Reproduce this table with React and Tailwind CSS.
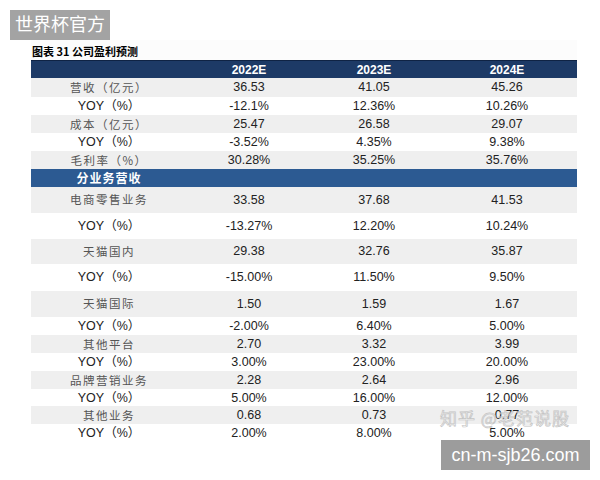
const rows = [
  { label: "营收（亿元）", cn: true, v: ["36.53", "41.05", "45.26"], h: "h-[19px]" },
  { label: "YOY（%）", v: ["-12.1%", "12.36%", "10.26%"], h: "h-[18px]" },
  { label: "成本（亿元）", cn: true, v: ["25.47", "26.58", "29.07"], h: "h-[18px]" },
  { label: "YOY（%）", v: ["-3.52%", "4.35%", "9.38%"], h: "h-[18px]" },
  { label: "毛利率（%）", cn: true, v: ["30.28%", "35.25%", "35.76%"], h: "h-[18px]" },
  { section: "分业务营收", h: "h-[18px]" },
  { label: "电商零售业务", cn: true, v: ["33.58", "37.68", "41.53"], h: "h-[26px]" },
  { label: "YOY（%）", v: ["-13.27%", "12.20%", "10.24%"], h: "h-[26px]" },
  { label: "天猫国内", cn: true, v: ["29.38", "32.76", "35.87"], h: "h-[25px]" },
  { label: "YOY（%）", v: ["-15.00%", "11.50%", "9.50%"], h: "h-[27px]" },
  { label: "天猫国际", cn: true, v: ["1.50", "1.59", "1.67"], h: "h-[26px]" },
  { label: "YOY（%）", v: ["-2.00%", "6.40%", "5.00%"], h: "h-[18px]" },
  { label: "其他平台", cn: true, v: ["2.70", "3.32", "3.99"], h: "h-[18px]" },
  { label: "YOY（%）", v: ["3.00%", "23.00%", "20.00%"], h: "h-[18px]" },
  { label: "品牌营销业务", cn: true, v: ["2.28", "2.64", "2.96"], h: "h-[18px]" },
  { label: "YOY（%）", v: ["5.00%", "16.00%", "12.00%"], h: "h-[17px]" },
  { label: "其他业务", cn: true, v: ["0.68", "0.73", "0.77"], h: "h-[18px]" },
  { label: "YOY（%）", v: ["2.00%", "8.00%", "5.00%"], h: "h-[18px]" },
];

const cols = "grid grid-cols-[156px_124px_126px_140px] items-center";

export default function App() {
  return (
    <div className="relative w-[600px] h-[480px] bg-white overflow-hidden font-['Liberation_Sans','Noto_Sans_CJK_SC',sans-serif] text-[#222]">
      {/* top tag */}
      <div className="ml-[10px] pt-[10px]">
        <div className="w-[100px] h-[30px] bg-[#a3a3a3] text-white text-[18px] leading-[30px] text-center">
          世界杯官方
        </div>
      </div>

      <div className="ml-[31px] w-[546px] bg-[#fcfcfc]">
        {/* title */}
        <div className="h-[20px] flex items-end pb-[3px] pl-[1px]">
          <span className="text-[11px] font-bold text-black leading-none font-['Noto_Sans_CJK_SC',sans-serif]">
            图表 31 公司盈利预测
          </span>
        </div>

        {/* header */}
        <div className={`${cols} h-[18px] bg-[#1d3a66] text-white text-[12px] font-bold border-t border-[#0f2344]`}>
          <div />
          <div className="text-center">2022E</div>
          <div className="text-center">2023E</div>
          <div className="text-center">2024E</div>
        </div>

        {rows.map((r, i) => {
          if (r.section) {
            return (
              <div key={i} className={`${cols} ${r.h} bg-[#2c5a92]`}>
                <div className="text-center text-white text-[12px] font-bold font-['Noto_Sans_CJK_SC',sans-serif] tracking-[1px]">
                  {r.section}
                </div>
              </div>
            );
          }
          return (
            <div key={i} className={`${cols} ${r.h} ${r.cn ? "bg-[#efefef]" : "bg-white"} text-[12.5px]`}>
              {r.cn ? (
                <div className="text-center text-[#555] text-[11.5px] tracking-[1.5px] font-['Noto_Sans_CJK_SC',sans-serif]">
                  {r.label}
                </div>
              ) : (
                <div className="text-center text-[#222] text-[12.5px]">{r.label}</div>
              )}
              {r.v.map((x, j) => (
                <div key={j} className="text-center">{x}</div>
              ))}
            </div>
          );
        })}
      </div>

      {/* watermark */}
      <div className="absolute left-[440px] top-[405px] text-[17px] text-transparent font-['Noto_Sans_CJK_SC',sans-serif] [-webkit-text-stroke:0.7px_#c4c4c4] tracking-[1px]">
        知乎 @老范说股
      </div>

      <div className="absolute left-[441px] top-[440px] w-[149px] h-[30px] bg-[#9c9c9c] text-white text-[18px] leading-[30px] text-center">
        cn-m-sjb26.com
      </div>
    </div>
  );
}
